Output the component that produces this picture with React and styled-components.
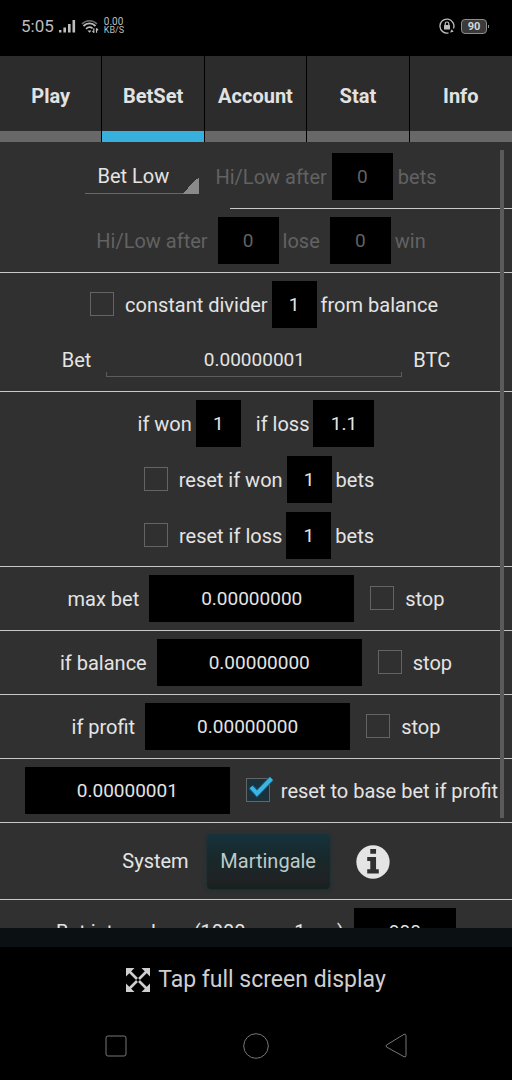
import React from "react";
import styled, { createGlobalStyle, css } from "styled-components";

const GlobalStyle = createGlobalStyle`
  *, *::before, *::after { box-sizing: border-box; }
  body {
    margin: 0;
    background: #000;
    color: #e4e4e4;
    font-family: Roboto, "Liberation Sans", sans-serif;
    font-size: 20px;
    line-height: 24px;
  }
  button, input, select { font: inherit; color: inherit; margin: 0; }
`;

const Screen = styled.div`
  display: flex;
  flex-direction: column;
  height: 100vh;
`;

/* Status bar */
const StatusBar = styled.header`
  flex: none;
  display: flex;
  align-items: center;
  justify-content: space-between;
  height: 56px;
  padding: 0 25px 4px 21px;
  color: #bdbdbd;
`;

const StatusGroup = styled.div`
  display: flex;
  align-items: center;
  gap: ${(p) => p.$gap}px;
`;

const Clock = styled.span`
  font-size: 17px;
`;

const Speed = styled.span`
  display: flex;
  flex-direction: column;
  font-size: 10px;
  line-height: 9px;
`;

const SpeedUnit = styled.span`
  font-size: 9px;
`;

const Battery = styled.span`
  position: relative;
  width: 26px;
  height: 15px;
  border: 1px solid #8c8c8c;
  border-radius: 4px;
  background: #3a3a3a;
  color: #d6d6d6;
  font-size: 11px;
  font-weight: 700;
  line-height: 13px;
  text-align: center;

  &::after {
    content: "";
    position: absolute;
    top: 5px;
    right: -3px;
    width: 1px;
    height: 3px;
    background: #8c8c8c;
  }
`;

/* Tabs */
const Tabs = styled.nav`
  flex: none;
  display: grid;
  grid-template-columns: repeat(5, 1fr);
  height: 86px;
`;

const Tab = styled.button`
  padding: 0 0 6px;
  border: 0;
  border-right: 1px solid #000;
  background: #2c2c2c;
  box-shadow: inset 0 -11px ${(p) => (p.$active ? "#37b0de" : "#686868")};
  color: #e2e2e2;
  font-weight: 700;

  &:last-child { border-right: 0; }
`;

/* Settings list */
const Panel = styled.div`
  position: relative;
  flex: 1;
  min-height: 0;
  background: #303030;
`;

const Scroller = styled.main`
  height: 100%;
  padding-top: 3px;
  overflow: hidden auto;
  scrollbar-width: none;
`;

const ScrollThumb = styled.div`
  position: absolute;
  top: 8px;
  right: 8px;
  width: 4px;
  height: 85%;
  background: #5a5a5a;
`;

const Section = styled.section`
  display: flex;
  flex-direction: column;
  gap: ${(p) => (p.$loose ? 9 : 8)}px;
  padding: 8px 0 ${(p) => (p.$loose ? 7 : 8)}px;
  border-bottom: 1px solid #c8c8c8;
`;

const ShortRule = styled.hr`
  height: 1px;
  margin: 0 0 0 45%;
  border: 0;
  background: #c8c8c8;
`;

const OpenSection = styled(Section)`
  border-bottom: 0;
`;

const Row = styled.div`
  display: flex;
  align-items: center;
  justify-content: center;
  gap: ${(p) => p.$gap ?? 4}px;
  min-height: 47px;
  padding-left: ${(p) => p.$lead ?? 0}px;
  color: ${(p) => (p.$muted ? "#626262" : "inherit")};
  white-space: nowrap;
`;

const Pair = styled.label`
  display: flex;
  align-items: center;
  gap: ${(p) => p.$gap ?? 4}px;
`;

const Field = styled.input`
  width: ${(p) => p.$w}px;
  height: 47px;
  padding: 0;
  border: 0;
  border-radius: 0;
  background: #000;
  font-size: 19px;
  text-align: center;

  &:disabled { color: #626262; }
`;

const tick = css`linear-gradient(#5c5c5c, #5c5c5c)`;

const LineField = styled(Field)`
  background:
    ${tick} left 0 bottom 6px / 100% 1px no-repeat,
    ${tick} left 0 bottom 6px / 1px 5px no-repeat,
    ${tick} right 0 bottom 6px / 1px 5px no-repeat;
`;

const Spinner = styled.select`
  appearance: none;
  width: 114px;
  height: 47px;
  margin-right: 12px;
  padding: 0 0 2px 12px;
  border: 0;
  background:
    linear-gradient(to bottom right, transparent 50%, #8a8a8a 50%) right 0 bottom 6px / 17px 17px no-repeat,
    linear-gradient(#666, #666) left 0 bottom 6px / 100% 1px no-repeat;
`;

const CheckLabel = styled.label`
  display: flex;
  align-items: center;
  gap: 11px;
`;

const CheckFrame = styled.span`
  position: relative;
  display: flex;
  margin: 0 0 2px 6px;
`;

const CheckInput = styled.input`
  appearance: none;
  width: 24px;
  height: 24px;
  border: 1px solid #646464;

  &:checked { background: #19323c; }
`;

const CheckMark = styled.svg`
  position: absolute;
  left: 0;
  top: -4px;
  pointer-events: none;
`;

const SystemRow = styled(Row)`
  min-height: 60px;
`;

const SystemButton = styled.button`
  width: 123px;
  height: 55px;
  margin: 0 22px 0 14px;
  border: 0;
  border-radius: 4px;
  background: linear-gradient(#16323c, #18282a 45%, #202224 85%, #16201f);
  box-shadow: 0 1px 4px #123038;
  color: #bccaca;
`;

const InfoButton = styled.button`
  display: flex;
  padding: 2px 0 0;
  border: 0;
  background: none;
`;

/* Footer */
const Strip = styled.div`
  flex: none;
  height: 19px;
  background: #0b1012;
`;

const FullScreenButton = styled.button`
  flex: none;
  display: flex;
  align-items: center;
  justify-content: center;
  gap: 8px;
  height: 65px;
  padding: 0;
  border: 0;
  background: #000;
  color: #cfcfcf;
  font-size: 23px;
`;

const NavBar = styled.nav`
  flex: none;
  display: grid;
  grid-template-columns: repeat(3, 1fr);
  height: 68px;
  padding: 0 9%;
`;

const NavButton = styled.button`
  display: flex;
  align-items: center;
  justify-content: center;
  padding: 0;
  border: 0;
  background: none;
  color: #777;
`;

function Check({ children, ...rest }) {
  const checked = rest.defaultChecked;
  return (
    <CheckLabel>
      <CheckFrame>
        <CheckInput type="checkbox" {...rest} />
        {checked && (
          <CheckMark width="28" height="28" viewBox="0 0 28 28" aria-hidden="true">
            <path d="M5 13 11 19.500 25.500 4.500" fill="none" stroke="#1b5a74" strokeWidth="6" />
            <path d="M5 13 11 19.500 25.500 4.500" fill="none" stroke="#3bb4e6" strokeWidth="4" />
          </CheckMark>
        )}
      </CheckFrame>
      {children}
    </CheckLabel>
  );
}

function StopRow({ label, value }) {
  return (
    <Section>
      <Row $gap={10}>
        <Pair $gap={10}>
          {label}
          <Field $w={205} defaultValue={value} />
        </Pair>
        <Check>stop</Check>
      </Row>
    </Section>
  );
}

function SignalIcon() {
  return (
    <svg width="17" height="14" viewBox="0 0 17 14" fill="#bdbdbd" aria-hidden="true">
      <rect x="0" y="11" width="2.4" height="2.5" />
      <rect x="4.4" y="8.5" width="2.6" height="5" />
      <rect x="9" y="5" width="2.6" height="8.5" />
      <rect x="13.5" y="1" width="2.6" height="12.5" />
    </svg>
  );
}

function WifiIcon() {
  return (
    <svg width="18" height="15" viewBox="0 0 18 15" fill="none" aria-hidden="true">
      <path d="M1 5C5 .6 12 .6 16 5" stroke="#6a6a6a" strokeWidth="1.6" />
      <path d="M2.5 7C6 3.400 11 3.400 14.500 7" stroke="#bdbdbd" strokeWidth="1.8" />
      <path d="M5 9.800C7.200 7.800 9.600 7.800 11.600 9.400" stroke="#bdbdbd" strokeWidth="1.8" />
      <path d="M6.500 11.500h4L8.500 13.700z" fill="#bdbdbd" />
      <path d="M12.800 9.200v4.500M11.500 12l1.300 1.700M15.500 13.800V9.300M15.500 9.300l1.500 2" stroke="#bdbdbd" strokeWidth="1.200" />
    </svg>
  );
}

function RotationLockIcon() {
  return (
    <svg width="16" height="16" viewBox="0 0 16 16" fill="none" aria-hidden="true">
      <path d="M9.500 14.900A7 7 0 1 1 14.500 10.500" stroke="#bdbdbd" strokeWidth="1.300" />
      <path d="M11 14.400l3.600-.6-1.800-2.600z" fill="#bdbdbd" />
      <rect x="5" y="7" width="6" height="4.500" rx=".5" fill="#bdbdbd" />
      <path d="M6.200 7V5.800a1.800 1.800 0 0 1 3.600 0V7" stroke="#bdbdbd" strokeWidth="1.200" />
    </svg>
  );
}

function InfoIcon() {
  return (
    <svg width="34" height="34" viewBox="0 0 100 100" aria-hidden="true">
      <circle cx="50" cy="50" r="49" fill="#e4e4e4" />
      <path
        d="M42 12h17v14H42zM33 35h26v36h8v13H33V71h9V47h-9z"
        fill="#303030"
      />
    </svg>
  );
}

function ExpandIcon() {
  return (
    <svg width="24" height="24" viewBox="0 0 24 24" aria-hidden="true">
      <path
        d="M0 0h8.500L0 8.500zM24 0v8.500L15.500 0zM24 24h-8.500L24 15.500zM0 24v-8.500L8.500 24z"
        fill="currentColor"
      />
      <path
        d="M3 3l8 8M21 3l-8 8M21 21l-8-8M3 21l8-8"
        fill="none"
        stroke="currentColor"
        strokeWidth="2.600"
      />
    </svg>
  );
}

const TABS = ["Play", "BetSet", "Account", "Stat", "Info"];

export default function App() {
  return (
    <>
      <GlobalStyle />
      <Screen>
        <StatusBar>
          <StatusGroup $gap={5}>
            <Clock>5:05</Clock>
            <SignalIcon />
            <WifiIcon />
            <Speed>
              <span>0.00</span>
              <SpeedUnit>KB/S</SpeedUnit>
            </Speed>
          </StatusGroup>
          <StatusGroup $gap={6}>
            <RotationLockIcon />
            <Battery>90</Battery>
          </StatusGroup>
        </StatusBar>

        <Tabs>
          {TABS.map((name) => (
            <Tab key={name} type="button" $active={name === "BetSet"}>
              {name}
            </Tab>
          ))}
        </Tabs>

        <Panel>
          <Scroller>
            <OpenSection>
              <Row $lead={10}>
                <Spinner aria-label="Bet direction" defaultValue="low">
                  <option value="low">Bet Low</option>
                  <option value="high">Bet High</option>
                </Spinner>
                <Row as="label" $muted $gap={5}>
                  Hi/Low after
                  <Field $w={61} defaultValue="0" disabled />
                  bets
                </Row>
              </Row>
            </OpenSection>
            <ShortRule />
            <Section>
              <Row $muted $lead={10} $gap={10}>
                <Row as="label" $gap={10}>
                  Hi/Low after
                  <Pair as="span">
                    <Field $w={61} defaultValue="0" disabled />
                    lose
                  </Pair>
                </Row>
                <Pair>
                  <Field $w={61} defaultValue="0" disabled />
                  win
                </Pair>
              </Row>
            </Section>

            <Section>
              <Row $lead={10}>
                <Check>constant divider</Check>
                <Pair>
                  <Field $w={45} defaultValue="1" />
                  from balance
                </Pair>
              </Row>
              <Row as="label" $gap={11}>
                <Pair as="span" $gap={15}>
                  Bet
                  <LineField $w={296} defaultValue="0.00000001" />
                </Pair>
                BTC
              </Row>
            </Section>

            <Section $loose>
              <Row $gap={15}>
                <Pair>
                  if won
                  <Field $w={45} defaultValue="1" />
                </Pair>
                <Pair>
                  if loss
                  <Field $w={61} defaultValue="1.1" />
                </Pair>
              </Row>
              <Row>
                <Check>reset if won</Check>
                <Pair>
                  <Field $w={45} defaultValue="1" />
                  bets
                </Pair>
              </Row>
              <Row>
                <Check>reset if loss</Check>
                <Pair>
                  <Field $w={45} defaultValue="1" />
                  bets
                </Pair>
              </Row>
            </Section>

            <StopRow label="max bet" value="0.00000000" />
            <StopRow label="if balance" value="0.00000000" />
            <StopRow label="if profit" value="0.00000000" />

            <Section>
              <Row $gap={10} $lead={11}>
                <Field $w={205} defaultValue="0.00000001" aria-label="Profit" />
                <Check defaultChecked>reset to base bet if profit</Check>
              </Row>
            </Section>

            <Section>
              <SystemRow>
                System
                <SystemButton type="button">Martingale</SystemButton>
                <InfoButton type="button" aria-label="About the system">
                  <InfoIcon />
                </InfoButton>
              </SystemRow>
            </Section>

            <OpenSection>
              <Row as="label" $gap={10}>
                Bet interval ms (1000ms = 1sec)
                <Field $w={102} defaultValue="900" />
              </Row>
            </OpenSection>
          </Scroller>
          <ScrollThumb />
        </Panel>

        <Strip />
        <FullScreenButton type="button">
          <ExpandIcon />
          Tap full screen display
        </FullScreenButton>
        <NavBar>
          <NavButton type="button" aria-label="Recent apps">
            <svg width="22" height="22" viewBox="0 0 22 22" fill="none" stroke="currentColor">
              <rect x="1" y="1" width="20" height="20" rx="2" />
            </svg>
          </NavButton>
          <NavButton type="button" aria-label="Home">
            <svg width="26" height="26" viewBox="0 0 26 26" fill="none" stroke="currentColor">
              <circle cx="13" cy="13" r="12.300" />
            </svg>
          </NavButton>
          <NavButton type="button" aria-label="Back">
            <svg width="22" height="26" viewBox="0 0 22 26" fill="none" stroke="currentColor">
              <path d="M1.500 12 19 1.300Q21 .6 21 2.500V22.500Q21 24.500 19 23.700L1.500 14Q.5 13 1.500 12z" />
            </svg>
          </NavButton>
        </NavBar>
      </Screen>
    </>
  );
}
